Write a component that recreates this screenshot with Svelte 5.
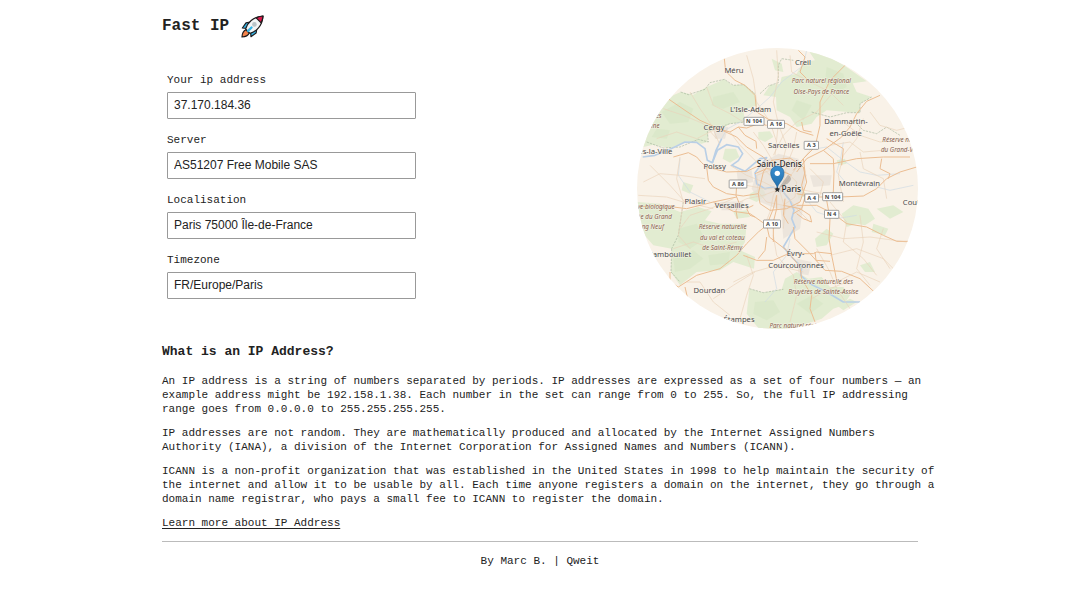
<script>
  const fields = [
    { id: 'ip', label: 'Your ip address', value: '37.170.184.36' },
    { id: 'server', label: 'Server', value: 'AS51207 Free Mobile SAS' },
    { id: 'place', label: 'Localisation', value: 'Paris 75000 Île-de-France' },
    { id: 'timezone', label: 'Timezone', value: 'FR/Europe/Paris' }
  ];

  const paragraphs = [
    [
      'An IP address is a string of numbers separated by periods. IP addresses are expressed as a set of four numbers — an',
      'example address might be 192.158.1.38. Each number in the set can range from 0 to 255. So, the full IP addressing',
      'range goes from 0.0.0.0 to 255.255.255.255.'
    ],
    [
      'IP addresses are not random. They are mathematically produced and allocated by the Internet Assigned Numbers',
      'Authority (IANA), a division of the Internet Corporation for Assigned Names and Numbers (ICANN).'
    ],
    [
      'ICANN is a non-profit organization that was established in the United States in 1998 to help maintain the security of',
      'the internet and allow it to be usable by all. Each time anyone registers a domain on the internet, they go through a',
      'domain name registrar, who pays a small fee to ICANN to register the domain.'
    ]
  ];

  const woods = [
    'M40 315 L50 270 L75 215 L130 160 L152 150 L190 158 L230 135 L283 112 L305 130 L345 128 L375 155 L382 190 L340 205 L345 240 L300 245 L275 262 L235 268 L232 300 L215 305 L170 298 L120 318 L70 308 Z',
    'M535 25 L590 40 L645 72 L710 118 L668 124 L680 150 L725 165 L690 185 L690 212 L655 210 L590 205 L560 225 L545 245 L500 255 L480 225 L440 205 L438 165 L400 160 L420 130 L450 125 L455 105 L500 95 L520 60 L555 55 Z',
    'M22 480 L90 485 L150 510 L205 495 L245 508 L225 535 L270 545 L350 545 L345 600 L330 625 L375 645 L372 680 L310 660 L270 685 L200 690 L150 730 L123 690 L125 620 L70 610 L35 570 Z',
    'M358 740 L400 752 L455 742 L465 710 L500 690 L535 710 L575 705 L600 735 L640 735 L660 760 L640 790 L610 800 L575 830 L480 862 L385 858 L350 815 Z',
    'M285 320 L318 320 L328 345 L300 362 L278 350 Z',
    'M360 455 L395 435 L410 460 L380 480 L358 470 Z',
    'M635 515 L670 490 L715 500 L735 530 L705 550 L680 545 L650 555 Z',
    'M500 445 L520 440 L528 462 L505 470 Z',
    'M385 270 L420 268 L430 285 L405 300 L385 290 Z',
    'M555 590 L590 560 L610 575 L590 610 L560 615 Z',
    'M730 545 L775 560 L765 580 L725 570 Z',
    'M425 50 L455 65 L460 90 L435 85 Z',
    'M310 510 L350 505 L360 525 L320 530 Z',
    'M690 670 L720 660 L735 690 L705 690 Z',
    'M620 355 L645 350 L650 365 L625 370 Z',
    'M160 420 L190 430 L180 455 L155 445 Z',
    'M740 500 L790 490 L820 510 L780 530 Z',
    'M620 790 L660 770 L680 780 L640 805 Z'
  ];

  const groves = [
    'M95 210 L150 180 L190 200 L175 240 L120 245 Z',
    'M250 165 L310 150 L330 180 L280 200 L245 190 Z',
    'M590 75 L640 95 L650 135 L610 155 L585 120 Z',
    'M500 175 L545 190 L520 235 L485 205 Z',
    'M145 560 L200 545 L225 590 L180 620 L145 600 Z',
    'M130 650 L190 625 L220 650 L180 680 L135 690 Z',
    'M235 640 L300 630 L295 665 L240 670 Z',
    'M375 780 L430 775 L450 810 L410 835 L370 815 Z',
    'M500 785 L545 760 L580 785 L540 815 Z',
    'M80 260 L120 265 L110 290 L65 285 Z'
  ];

  const urban = [
    'M375 405 L400 360 L445 335 L505 350 L530 400 L520 450 L500 500 L440 500 L390 480 L365 440 Z',
    'M320 390 L365 385 L370 420 L325 430 Z',
    'M450 490 L520 490 L510 560 L460 590 L455 530 Z',
    'M250 255 L295 255 L285 290 L255 290 Z',
    'M500 650 L545 660 L535 700 L505 695 Z',
    'M540 400 L605 400 L600 430 L550 435 Z',
    'M270 480 L340 478 L335 505 L275 505 Z'
  ];

  const rivers = [
    'M38 345 L75 340 L120 322 L165 300 L200 301 L225 320 L232 355 L247 362 L258 325 L275 290',
    'M247 362 L262 325 L290 308 L325 315 L338 335 L325 356 L305 370 L345 388 L390 350 L410 347 L375 392 L380 425 L405 440 L430 435 L460 450 L480 475 L492 505 L485 530 L495 555 L475 590 L460 615 L485 645 L515 675 L512 700 L540 725 L590 750 L640 780 L690 780'
  ];

  const streams = [
    'M460 450 L495 440 L520 460 L540 485 L560 510 L620 530 L680 520',
    'M275 290 L290 262 L330 240 L375 205 L420 165 L455 120 L520 70 L530 25',
    'M560 320 L590 315 L640 355 L690 390 L740 400 L810 395',
    'M640 300 L632 350 L620 390 L650 425 L720 430 L780 445 L850 430',
    'M150 350 L145 400 L180 450 L240 480',
    'M480 590 L470 640 L430 690 L440 740 L405 780'
  ];

  const lanes = [
    'M40 420 L90 395 L150 400 L225 410', 'M60 370 L120 430 L165 480 L250 500',
    'M150 345 L140 410 L160 480 L145 580 L180 620', 'M25 460 L110 465 L160 480',
    'M180 150 L210 200 L245 250 L270 310', 'M230 135 L250 190 L300 215 L340 240',
    'M350 40 L370 110 L380 180 L420 240 L440 300', 'M440 25 L445 100 L430 180 L445 245 L435 340',
    'M430 340 L460 280 L500 240 L560 210 L610 150', 'M480 40 L485 90 L540 120 L600 150 L640 190',
    'M700 230 L680 290 L640 340 L625 400 L640 480', 'M640 240 L690 280 L750 300 L850 290',
    'M720 210 L750 250 L800 265 L840 255', 'M690 330 L700 380 L760 410 L770 470',
    'M600 480 L650 540 L640 600 L700 650 L740 700', 'M560 570 L640 590 L720 585 L830 600',
    'M690 520 L700 600 L680 680 L720 730', 'M760 560 L740 620 L780 680',
    'M600 640 L680 620 L760 650 L800 690', 'M620 720 L680 690 L750 720',
    'M350 640 L370 700 L350 760 L330 830', 'M310 720 L370 690 L440 670 L520 690',
    'M170 720 L210 720 L250 780 L300 820', 'M250 770 L310 730 L350 705 L375 690',
    'M130 620 L190 600 L250 620 L320 600', 'M150 560 L180 520 L240 500 L310 470',
    'M430 580 L440 640 L490 700 L500 760 L480 840', 'M545 770 L600 740 L650 720',
    'M560 620 L600 690 L620 740 L660 800', 'M600 310 L660 300 L700 330 L760 325',
    'M80 290 L140 270 L200 290 L260 260', 'M100 200 L160 220 L220 245 L260 290',
    'M300 270 L330 310 L380 360 L420 400', 'M370 270 L400 310 L430 360',
    'M450 260 L470 310 L460 350 L450 400', 'M500 270 L490 320 L470 370 L460 420',
    'M560 300 L520 350 L490 390 L460 430', 'M540 380 L580 420 L570 460 L530 480',
    'M300 370 L350 400 L400 420 L440 440', 'M300 440 L350 430 L400 440 L440 440',
    'M310 490 L350 470 L400 460 L440 445', 'M400 560 L420 510 L430 460 L440 440',
    'M460 560 L465 500 L450 450', 'M540 540 L500 500 L470 460 L445 442',
    'M620 460 L550 450 L500 440 L445 440', 'M380 400 L420 385 L470 390 L500 420 L495 465 L460 490 L410 480 L385 450 Z'
  ];

  const roads = [
    'M283 50 L287 88 L315 115 L345 130 L375 160 L380 210 L415 232 L470 245 L510 268 L550 280',
    'M117 172 L165 205 L210 235 L270 262 L320 285 L350 315 L400 345 L440 385',
    'M270 262 L300 270 L325 255 L350 258 L385 245 L410 250',
    'M325 255 L345 280 L378 298 L380 320',
    'M130 345 L175 332 L200 345 L215 362 L230 375 L290 390 L350 388 L400 365',
    'M230 375 L235 415 L250 435 L290 455 L340 462 L385 455',
    'M22 495 L90 490 L170 500 L250 480 L320 465',
    'M250 480 L285 495 L310 508 L360 515 L375 525 L410 550',
    'M145 735 L200 700 L270 680 L320 640 L350 605 L385 570 L410 550 L430 500 L440 460',
    'M165 735 L172 765', 'M320 430 L318 460 L328 485 L318 505 L322 530',
    'M410 550 L418 585 L470 625 L510 675 L515 710 L545 760 L540 800 L555 840',
    'M340 640 L380 655 L430 655 L475 635', 'M410 585 L405 625 L385 650',
    'M505 25 L525 45 L510 90 L530 110', 'M645 70 L600 115 L570 180 L570 250 L555 315 L520 350 L490 385',
    'M750 160 L710 178 L680 215 L660 255 L635 285 L580 325 L530 350 L500 390',
    'M580 325 L610 350 L612 390 L610 450 L590 475 L600 530 L597 590 L605 640 L615 690 L620 715',
    'M520 350 L525 390 L515 430 L525 465 L515 500 L490 515',
    'M540 365 L610 365 L680 350 L760 345 L840 345',
    'M755 350 L750 380 L780 395 L775 410', 'M860 375 L810 390 L770 410 L740 440 L700 462 L630 465 L550 465 L500 455',
    'M500 490 L560 490 L610 515 L650 545 L710 555 L760 580 L800 598 L835 598',
    'M460 490 L510 500 L540 520 L545 540 L520 530 L500 515',
    'M490 555 L495 590 L540 635 L585 685 L635 688 L690 710 L735 752',
    'M500 635 L550 635 L560 630 L605 635', 'M555 630 L558 655 L600 658',
    'M385 455 L400 390 L425 355 L480 348 L520 375 L530 420 L510 480 L470 500 L420 505 L390 485 Z',
    'M370 490 L350 500 L360 520 L375 525', 'M440 460 L440 500 L430 540 L430 600',
    'M465 470 L460 520 L475 545', 'M545 270 L520 265 L515 240', 'M590 290 L640 320 L635 370',
    'M120 690 L120 720 L145 735', 'M375 395 L410 380 L450 385 L485 400'
  ];

  const borders = [
    'M152 150 L175 158 L200 150 L225 142 L240 122 L283 112 L310 130 L340 128 L375 155',
    'M390 155 L415 132 L445 122 L445 70 L455 50 L490 55',
    'M50 300 L100 318 L150 315 L205 292 L235 300 L232 268 L300 245 L345 240',
    'M545 210 L600 225 L650 212 L690 212 L690 185 L725 165',
    'M125 620 L123 690 L150 720', 'M160 480 L145 580 L125 620',
    'M358 740 L400 752 L460 742', 'M670 235 L700 265 L740 275 L770 255 L810 280'
  ];

  const towns = [
    ['Méru', 312, 92], ['Creil', 519, 69], ["L'Isle-Adam", 362, 209], ['Cergy', 252, 265],
    ['Dammartin-', 648, 245], ['en-Goële', 647, 281], ['Sarcelles', 461, 317],
    ['Poissy', 254, 382], ['Plaisir', 196, 485], ['Versailles', 305, 498],
    ['Montévrain', 688, 432], ['Évry-', 497, 641], ['Courcouronnes', 498, 678],
    ['Dourdan', 238, 753], ['Étampes', 327, 840], ['Rambouillet', 119, 645],
    ['Mantes-la-Ville', 48, 337], ['Coulommiers', 891, 489]
  ];

  const parks = [
    ['Parc naturel régional', 574, 124], ['Oise-Pays de France', 574, 155],
    ['Réserve naturelle', 829, 300], ['du Grand-Voyeux', 825, 330],
    ['Réserve biologique', 55, 501], ['dirigée du Grand', 54, 531], ['Étang Neuf', 55, 562],
    ['Réserve naturelle', 278, 561], ['du val et coteau', 277, 593], ['de Saint-Rémy', 277, 624],
    ['Réserve naturelle des', 580, 725], ['Bruyères de Sainte-Assise', 580, 756],
    ['Parc naturel régional', 507, 859], ['es', 86, 228], ['ine', 76, 259]
  ];

  const shields = [
    ['N 104', 372, 238, 60], ['A 16', 438, 247, 51], ['A 3', 544, 310, 43], ['A 86', 324, 426, 53],
    ['A 4', 545, 468, 41], ['N 104', 608, 464, 60], ['N 4', 605, 517, 43], ['A 10', 426, 546, 51]
  ];
</script>

<main>
  <header>
    <h1>Fast IP</h1>
    <svg class="rocket" viewBox="0 0 24 24" role="img" aria-label="Rocket">
      <g stroke="#1c1a1c" stroke-width="1.2" stroke-linejoin="round">
        <path d="M9.5 7.5 5.2 8.2 1.4 13.6 6.4 14Z" fill="#35b4e4" />
        <path d="M16.5 14.5 15.8 18.8 10.4 22.6 10 17.6Z" fill="#35b4e4" />
        <path d="M5.2 15.4C2.5 16.5 1.2 19 1 23 5 22.8 7.5 21.5 8.6 18.8Z" fill="#f3834b" />
        <path d="M4.8 14.6C6.5 8.5 12.5 1.6 23 1 22.4 11.5 15.5 17.5 9.4 19.2Z" fill="#f3f5f7" />
        <path d="M15.8 3C18.2 1.8 20.6 1.2 23 1 22.8 3.4 22.2 5.8 21 8.2Z" fill="#d71a4b" />
      </g>
      <circle cx="14" cy="9.8" r="2.4" fill="#b9c3c8" />
      <path d="M7.4 16.6 11 13" stroke="#35b4e4" stroke-width="2.4" stroke-linecap="round" />
    </svg>
  </header>

  <section class="overview">
    <form>
      {#each fields as field}
        <div class="field">
          <label for={field.id}>{field.label}</label>
          <input id={field.id} type="text" value={field.value} readonly />
        </div>
      {/each}
    </form>

    <svg class="map" viewBox="21 18 843 843" role="img" aria-label="Map of Paris">
      <defs>
        <clipPath id="disc"><circle cx="442.5" cy="439.5" r="421.5" /></clipPath>
        <linearGradient id="pin" x1="0" y1="0" x2="0" y2="1">
          <stop offset="0" stop-color="#3a8fd0" />
          <stop offset="1" stop-color="#226fac" />
        </linearGradient>
      </defs>
      <g clip-path="url(#disc)">
        <rect x="21" y="18" width="843" height="843" fill="#f9f2e8" />
        {#each woods as d}<path {d} class="wood" />{/each}
        {#each groves as d}<path {d} class="grove" />{/each}
        {#each urban as d}<path {d} class="urban" />{/each}
        {#each borders as d}<path {d} class="border" />{/each}
        {#each streams as d}<path {d} class="stream" />{/each}
        {#each rivers as d}<path {d} class="river" />{/each}
        {#each lanes as d}<path {d} class="lane" />{/each}
        {#each roads as d}<path {d} class="road" />{/each}
        {#each parks as [name, x, y]}<text {x} {y} class="park">{name}</text>{/each}
        {#each towns as [name, x, y]}<text {x} {y} class="town">{name}</text>{/each}
        <text x="448" y="374" class="city">Saint-Denis</text>
        <text x="484" y="451" class="city">Paris</text>
        {#each shields as [name, x, y, width]}
          <rect x={x - width / 2} y={y - 12} {width} height="24" rx="2" class="shield" />
          <text {x} y={y + 6} class="route">{name}</text>
        {/each}
        <path d="M444 441 474 398Q492 408 474 424Z" fill="#6d655f" opacity=".35" />
        <path d="M442 433l3 6 6 1-5 4 2 7-6-4-6 4 2-7-5-4 6-1Z" fill="#302f2e" />
        <path d="M442 437C438 421 422 413 422 392A20 20 0 0 1 462 392C462 413 446 421 442 437Z" fill="url(#pin)" stroke="#2468a0" stroke-width="2" />
        <circle cx="442" cy="394" r="8" fill="#fff" />
      </g>
    </svg>
  </section>

  <article>
    <h2>What is an IP Address?</h2>
    {#each paragraphs as lines}
      <p>
        {#each lines as line}<span>{line} </span>{/each}
      </p>
    {/each}
    <a href="#learn">Learn more about IP Address</a>
  </article>

  <footer>By Marc B. | Qweit</footer>
</main>

<style>
  :global(body) {
    margin: 0;
    background: #fff;
  }

  main {
    width: 70%;
    margin: 0 auto;
    padding: 12px 0;
    color: #222;
    font-family: 'Liberation Mono', monospace;
    font-size: 11px;
    line-height: 14px;
  }

  header {
    display: flex;
    align-items: center;
    gap: 12px;
    height: 28px;
  }

  h1 {
    margin: 0;
    font-size: 16px;
    line-height: 28px;
  }

  .rocket {
    width: 23px;
    height: 23px;
  }

  .overview {
    display: flex;
    justify-content: space-between;
    align-items: center;
    margin-top: 8px;
  }

  form {
    display: flex;
    flex-direction: column;
    gap: 14px;
    width: 33%;
    padding: 0 5px 6px;
  }

  .field {
    display: flex;
    flex-direction: column;
    gap: 5px;
  }

  input {
    box-sizing: border-box;
    width: 100%;
    height: 27px;
    padding: 0 6px;
    border: 1px solid #999;
    border-radius: 1px;
    background: #fff;
    color: #222;
    font: 12px 'Liberation Sans', sans-serif;
  }

  .map {
    width: 281px;
    height: 281px;
    font-family: 'Noto Sans', sans-serif;
    text-anchor: middle;
  }

  .wood { fill: #e2ecd1; }
  .grove { fill: #d3e5c0; opacity: .45; }
  .urban { fill: #e7e0d7; opacity: .7; }
  .border { fill: none; stroke: #a9b9a0; stroke-width: 2; stroke-dasharray: 7 3; }
  .river { fill: none; stroke: #b9cfe6; stroke-width: 5; stroke-linejoin: round; }
  .stream { fill: none; stroke: #cfdbe4; stroke-width: 2; }
  .lane { fill: none; stroke: #ead3bb; stroke-width: 2; stroke-linejoin: round; }
  .road { fill: none; stroke: #ebbd92; stroke-width: 3; stroke-linejoin: round; }
  .town,
  .city,
  .park {
    paint-order: stroke;
    stroke: #fbf6ee;
    stroke-width: 3;
    stroke-opacity: .7;
  }
  .town { fill: #4a4a4a; font-size: 23px; }
  .city { fill: #2b2b2b; font-size: 25px; font-weight: 500; }
  .park { fill: #86604c; font-size: 19px; font-style: italic; }
  .shield { fill: #fff; stroke: #777; stroke-width: 2; }
  .route { fill: #444; font-size: 17px; font-weight: 700; }

  article {
    padding: 15px 0 11px;
    border-bottom: 1px solid #bbb;
  }

  h2 {
    margin: 0 0 14px;
    font-size: 13px;
    line-height: 16px;
  }

  p {
    margin: 0 0 10px;
  }

  p span {
    display: block;
    white-space: nowrap;
  }

  a {
    color: inherit;
    text-underline-offset: 2px;
  }

  footer {
    padding-top: 12px;
    text-align: center;
  }
</style>
